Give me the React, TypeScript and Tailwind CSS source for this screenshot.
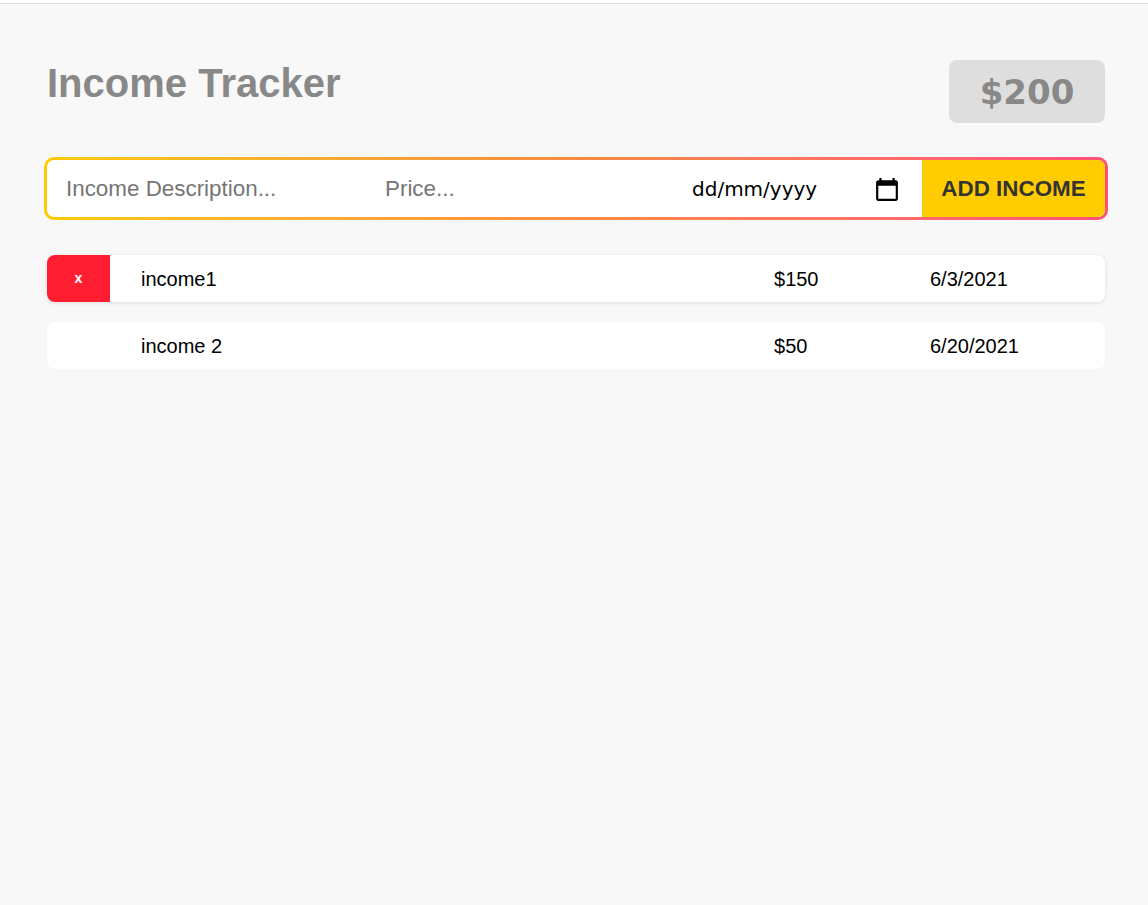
import React, { useState } from "react";

type Income = { id: number; desc: string; price: number; date: string };

const initial: Income[] = [
  { id: 1, desc: "income1", price: 150, date: "6/3/2021" },
  { id: 2, desc: "income 2", price: 50, date: "6/20/2021" },
];

function CalendarIcon() {
  return (
    <svg width="22" height="24" viewBox="2 0 20 22" fill="currentColor" aria-hidden>
      <path d="M20 3h-1V1h-2v2H7V1H5v2H4c-1.1 0-2 .9-2 2v15c0 1.1.9 2 2 2h16c1.1 0 2-.9 2-2V5c0-1.1-.9-2-2-2zm0 17H4V8h16v12z" />
    </svg>
  );
}

export default function App() {
  const [incomes, setIncomes] = useState<Income[]>(initial);
  const [hovered, setHovered] = useState<number | null>(1);
  const total = incomes.reduce((s, i) => s + i.price, 0);

  return (
    <div className="min-h-screen bg-[#f8f8f8] font-['Liberation_Sans',Arial,sans-serif]">
      <div className="h-[3px] bg-white" />
      <main className="border-t border-[#dcdcdc] pl-[47px] pr-[43px] pt-[56px]">
        <header className="flex items-start justify-between">
          <h1 className="text-[40px] leading-[46px] font-bold text-[#888]">Income Tracker</h1>
          <div className="flex h-[63px] w-[156px] items-center justify-center rounded-lg bg-[#dedede] pt-[2px] font-['DejaVu_Sans',sans-serif] text-[34px] font-bold text-[#888]">
            ${total}
          </div>
        </header>

        <form
          className="-mx-[3px] mt-[34px] rounded-[10px] bg-gradient-to-r from-[#ffcb00] via-[#fb8b40] to-[#ff4f7b] p-[3px]"
          onSubmit={(e) => e.preventDefault()}
        >
          <div className="flex h-[57px] overflow-hidden rounded-[7px] bg-white">
            <input
              type="text"
              placeholder="Income Description..."
              className="w-[319px] bg-transparent px-[19px] text-[22.4px] text-black outline-none placeholder:text-[#757575]"
            />
            <input
              type="text"
              placeholder="Price..."
              className="min-w-0 flex-1 bg-transparent px-[19px] text-[22.4px] text-black outline-none placeholder:text-[#757575]"
            />
            <div className="flex w-[249px] items-center justify-between pl-[19px] pr-[24px] font-['DejaVu_Sans',sans-serif] text-[20px] text-black">
              <span>dd/mm/yyyy</span>
              <CalendarIcon />
            </div>
            <button
              type="submit"
              className="w-[183px] bg-[#ffcc00] text-[22.4px] font-bold text-[#333]"
            >
              ADD INCOME
            </button>
          </div>
        </form>

        <ul className="mt-[35px] flex flex-col gap-5">
          {incomes.map((inc) => (
            <li
              key={inc.id}
              onMouseEnter={() => setHovered(inc.id)}
              className={
                "flex h-[47px] items-center overflow-hidden rounded-lg bg-white text-[20px] text-black " +
                (hovered === inc.id ? "shadow-[0_1px_5px_rgba(0,0,0,0.1)]" : "")
              }
            >
              <div className="h-full w-[63px]">
                {hovered === inc.id && (
                  <button
                    onClick={() => setIncomes(incomes.filter((i) => i.id !== inc.id))}
                    className="h-full w-full bg-[#ff1d32] text-[14px] font-bold text-white"
                  >
                    x
                  </button>
                )}
              </div>
              <span className="flex-1 pl-[31px]">{inc.desc}</span>
              <span className="w-[156px]">${inc.price}</span>
              <span className="w-[175px]">{inc.date}</span>
            </li>
          ))}
        </ul>
      </main>
    </div>
  );
}
